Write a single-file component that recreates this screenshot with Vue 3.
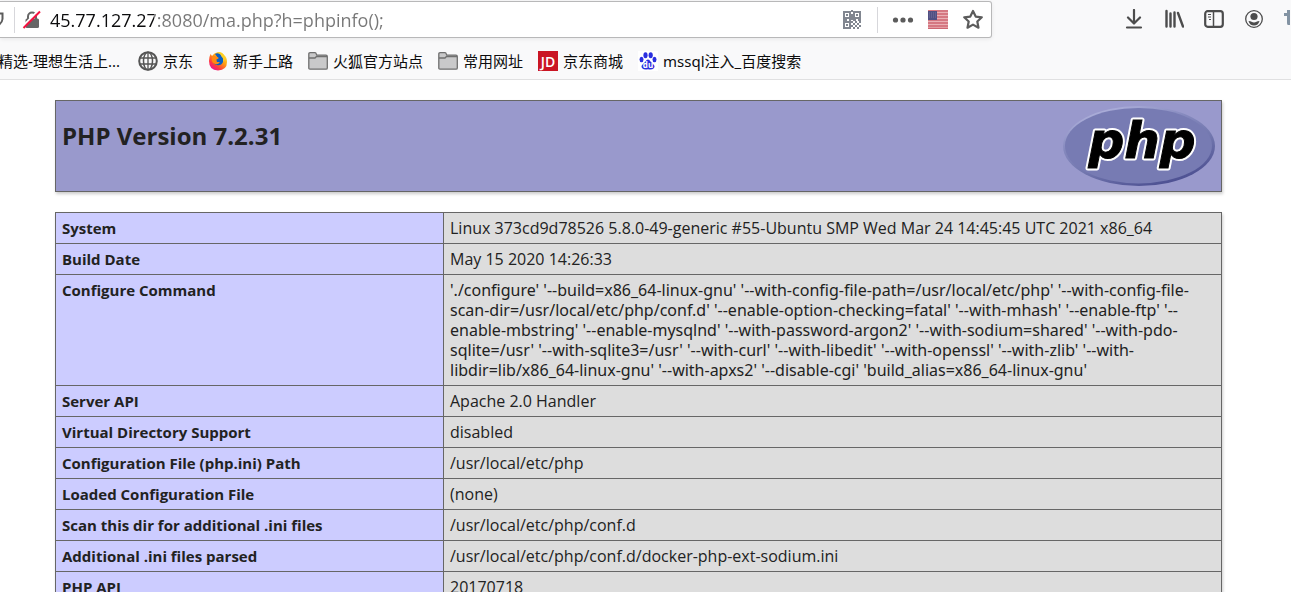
<script setup>
import { ref } from 'vue'

const url = ref('45.77.127.27:8080/ma.php?h=phpinfo();')

const bookmarks = [
  { icon: 'globe', label: '京东' },
  { icon: 'firefox', label: '新手上路' },
  { icon: 'folder', label: '火狐官方站点' },
  { icon: 'folder', label: '常用网址' },
  { icon: 'jd', label: '京东商城' },
  { icon: 'baidu', label: 'mssql注入_百度搜索' },
]

const rows = [
  ['System', 'Linux 373cd9d78526 5.8.0-49-generic #55-Ubuntu SMP Wed Mar 24 14:45:45 UTC 2021 x86_64'],
  ['Build Date', 'May 15 2020 14:26:33'],
  ['Configure Command', [
    "'./configure' '--build=x86_64-linux-gnu' '--with-config-file-path=/usr/local/etc/php' '--with-config-file-",
    "scan-dir=/usr/local/etc/php/conf.d' '--enable-option-checking=fatal' '--with-mhash' '--enable-ftp' '--",
    "enable-mbstring' '--enable-mysqlnd' '--with-password-argon2' '--with-sodium=shared' '--with-pdo-",
    "sqlite=/usr' '--with-sqlite3=/usr' '--with-curl' '--with-libedit' '--with-openssl' '--with-zlib' '--with-",
    "libdir=lib/x86_64-linux-gnu' '--with-apxs2' '--disable-cgi' 'build_alias=x86_64-linux-gnu'",
  ].join('\n')],
  ['Server API', 'Apache 2.0 Handler'],
  ['Virtual Directory Support', 'disabled'],
  ['Configuration File (php.ini) Path', '/usr/local/etc/php'],
  ['Loaded Configuration File', '(none)'],
  ['Scan this dir for additional .ini files', '/usr/local/etc/php/conf.d'],
  ['Additional .ini files parsed', '/usr/local/etc/php/conf.d/docker-php-ext-sodium.ini'],
  ['PHP API', '20170718'],
]
</script>

<template>
  <div class="window">
    <header class="chrome">
      <div class="navbar">
        <div class="urlbar">
          <svg class="shield" width="6" height="20" viewBox="0 0 6 20"><path d="M-4 3.500H2.500V9Q2 14-4 16.500" fill="none" stroke="#5c5c5c" stroke-width="2" /></svg>
          <span class="divider"></span>
          <button class="icon-btn lock" aria-label="Connection not secure">
            <svg width="20" height="20" viewBox="0 0 20 20">
              <path d="M6 9V6.500a4 4 0 0 1 8 0V9" fill="none" stroke="#666" stroke-width="2" />
              <rect x="3.500" y="8.500" width="13.500" height="9.500" rx="1.500" fill="#666" />
              <path d="M0.500 16.500 16 1" stroke="#fff" stroke-width="2" />
              <path d="M1.500 18 18 1.500" stroke="#f5113f" stroke-width="2" />
            </svg>
          </button>
          <input v-model="url" class="address" type="text" aria-label="Address" spellcheck="false" />
          <button class="icon-btn" aria-label="QR code">
            <svg width="20" height="20" viewBox="0 0 20 20" fill="none" stroke="#818690" stroke-width="2">
              <rect x="2" y="2" width="6" height="6" /><rect x="12" y="2" width="6" height="6" /><rect x="2" y="12" width="6" height="6" />
              <path d="M4 5h2M14 5h2M4 15h2M9 1h2M9 5h2M10 6v4M1 10h4M7 10h2M11 10h3M16 10h3M9 12h2M13 12h2M17 12h2M11 14h2M15 14h2M9 16h2M13 16h2M17 16h2M11 18h2M15 18h2" />
            </svg>
          </button>
          <span class="divider gap"></span>
          <button class="icon-btn" aria-label="Page actions">
            <svg width="22" height="20" viewBox="0 0 22 20" fill="#5c5c5c"><circle cx="3.500" cy="10" r="2.600" /><circle cx="11" cy="10" r="2.600" /><circle cx="18.500" cy="10" r="2.600" /></svg>
          </button>
          <button class="icon-btn flag" aria-label="Site location">
            <svg width="20" height="19" viewBox="0 0 20 19">
              <rect width="20" height="19" fill="#eab0b5" />
              <path d="M0 1h20M0 4h20M0 7h20M0 10h20M0 13h20M0 16h20M0 18.500h20" stroke="#ce6672" stroke-width="1.500" />
              <rect y="1" width="9" height="9" fill="#504f82" />
              <path d="M1 3h7M1 5h7M1 7h7" stroke="#74729c" stroke-dasharray="1 1" />
            </svg>
          </button>
          <button class="icon-btn star" aria-label="Bookmark this page">
            <svg width="22" height="22" viewBox="0 0 22 22"><path d="m11 2 2.700 5.600 6.100.7-4.500 4.200 1.200 6.200-5.500-3.100-5.500 3.100 1.200-6.200-4.500-4.200 6.100-.7Z" fill="none" stroke="#5c5c5c" stroke-width="2.200" stroke-linejoin="round" /></svg>
          </button>
        </div>
        <div class="tools">
          <button class="icon-btn" aria-label="Downloads">
            <svg width="20" height="20" viewBox="0 0 20 20" fill="none" stroke="#4c4c4c" stroke-width="2.200" stroke-linecap="round" stroke-linejoin="round"><path d="M10 1v13M4 8.500l6 6 6-6M3 18.500h14" /></svg>
          </button>
          <button class="icon-btn" aria-label="Library">
            <svg width="20" height="20" viewBox="0 0 20 20" fill="none" stroke="#4c4c4c" stroke-width="2.400" stroke-linecap="round"><path d="M2.500 2v15.500M6.500 4.500v13M10.500 3.500v14M14 4l5 13.500" /></svg>
          </button>
          <button class="icon-btn" aria-label="Sidebars">
            <svg width="20" height="20" viewBox="0 0 20 20" fill="none" stroke="#4c4c4c"><rect x="1.200" y="2.200" width="17.600" height="15.600" rx="2.500" stroke-width="2.200" /><path d="M9.500 2v16" stroke-width="1.500" /><path d="M4 5.500h3M4 8h3M5 10.500h2" stroke-width="1.200" /></svg>
          </button>
          <button class="icon-btn" aria-label="Account">
            <svg width="20" height="20" viewBox="0 0 20 20" fill="#4c4c4c"><circle cx="10" cy="10" r="8.300" fill="none" stroke="#4c4c4c" stroke-width="1.300" /><circle cx="10" cy="7.500" r="3.600" /><path d="M4.500 12q2 0 3 .8 2.500 1.200 5 0 1-.8 3-.8-1.300 4.500-5.500 4.500T4.500 12Z" /></svg>
          </button>
          <svg class="extension" width="6" height="20" viewBox="0 0 6 20" fill="#8393a3"><path d="M3 1h3v15H4Q3 16 3 14V7H0V4h3Z" /></svg>
        </div>
      </div>
      <nav class="bookmarks">
        <a class="bookmark first" href="#">精选-理想生活上...</a>
        <a v-for="b in bookmarks" :key="b.label" class="bookmark" href="#">
          <svg v-if="b.icon === 'globe'" width="20" height="20" viewBox="0 0 20 20" fill="none" stroke="#555" stroke-width="1.500">
            <circle cx="10" cy="10" r="8.800" stroke-width="2" /><ellipse cx="10" cy="10" rx="4.500" ry="8.800" /><path d="M10 1v18M1.500 7h17M1.500 13h17" stroke-width="1.300" />
          </svg>
          <svg v-else-if="b.icon === 'firefox'" width="20" height="20" viewBox="0 0 20 20">
            <defs>
              <linearGradient id="fox" x1=".85" y1=".1" x2=".2" y2=".95"><stop offset="0" stop-color="#ffe638" /><stop offset=".4" stop-color="#ff9a12" /><stop offset=".75" stop-color="#ff3a3f" /><stop offset="1" stop-color="#e9129a" /></linearGradient>
            </defs>
            <path d="M2.500 3 4 5Q6 2 10 1q4 0 6 3 3 2 3 7 0 8-9 8.500Q1 19 1 10q0-4 1.500-7Z" fill="url(#fox)" />
            <path d="M7 3q3-2 6 1 3 3 2 7-2 4-6 3-4-1-4-4 2 1 4 0l-2-2 3-1Z" fill="#0a5fc4" />
            <path d="M4 6q2-2 5 0l2 1-3 2 1 2 3 0q-2 3-5 2-4-1-3-7Z" fill="#ff8a12" />
            <path d="M10 1q3 1 3 4 3 2 2 6 3-2 1-7-2-3-6-3Z" fill="#ffcf24" />
          </svg>
          <svg v-else-if="b.icon === 'folder'" width="20" height="20" viewBox="0 0 20 20" fill="#c9c9ca" stroke="#6f6f6f" stroke-width="1.300">
            <path d="M.8 17V3q0-1.300 1.300-1.300H7q1 0 1.300 1.300l.5 1.200H18q1.300 0 1.300 1.300V17q0 1.200-1.300 1.200H2Q.8 18.200.8 17Z" /><path d="M1 7h6l1.500-1.500H19" fill="none" />
          </svg>
          <svg v-else-if="b.icon === 'jd'" width="20" height="20" viewBox="0 0 20 20">
            <rect width="20" height="20" fill="#ca1524" /><text x="10" y="15.500" text-anchor="middle" class="jd">JD</text>
          </svg>
          <svg v-else width="20" height="20" viewBox="0 0 20 20" fill="#2a2fe0">
            <rect width="20" height="20" fill="#fff" /><ellipse cx="7.500" cy="4.300" rx="2.100" ry="3" /><ellipse cx="12.700" cy="4.300" rx="2.100" ry="3" /><ellipse cx="3.500" cy="8.500" rx="2" ry="2.700" /><ellipse cx="16.500" cy="8.500" rx="2" ry="2.700" />
            <path d="M10 8.500q1.500 0 2.500 2l3 3q2 2 0 4-1.500 1.500-5.500.8-4 .7-5.500-.8-2-2 0-4l3-3q1-2 2.500-2Z" /><text x="10" y="17" text-anchor="middle" class="du">du</text>
          </svg>
          <span>{{ b.label }}</span>
        </a>
      </nav>
    </header>

    <main class="page">
      <section class="banner">
        <h1>PHP Version 7.2.31</h1>
        <svg class="logo" width="152" height="80" viewBox="0 0 152 80" role="img" aria-label="PHP logo">
          <defs>
            <linearGradient id="rim" x1=".2" y1="0" x2=".75" y2="1"><stop offset="0" stop-color="#b4b6df" /><stop offset=".35" stop-color="#8488bd" /><stop offset=".6" stop-color="#7378af" /><stop offset="1" stop-color="#484b8e" /></linearGradient>
          </defs>
          <ellipse cx="76" cy="40" rx="76" ry="40" fill="url(#rim)" />
          <ellipse cx="75.500" cy="39.700" rx="73.500" ry="37.700" fill="#777bb3" />
          <text x="79" y="52" text-anchor="middle" class="php php-outline">php</text>
          <text x="79" y="52" text-anchor="middle" class="php" aria-hidden="true">php</text>
        </svg>
      </section>

      <table class="info">
        <tbody>
          <tr v-for="[name, value] in rows" :key="name">
            <th scope="row">{{ name }}</th>
            <td :class="{ command: value.includes('\n') }">{{ value }}</td>
          </tr>
        </tbody>
      </table>
    </main>
  </div>
</template>

<style>
html {
  overflow: hidden;
}
body {
  background: #fff;
}
</style>

<style scoped>
.window {
  height: 100vh;
  overflow: hidden;
  color: #222;
  font-family: "Open Sans", "Noto Sans CJK SC", sans-serif;
}
.chrome {
  box-sizing: border-box;
  height: 80px;
  background: #f9f9fa;
  border-bottom: 1px solid #e0e0e1;
}
.navbar {
  display: flex;
  align-items: flex-start;
  padding-top: 1px;
}
.urlbar {
  box-sizing: border-box;
  flex: 1;
  display: flex;
  align-items: center;
  height: 37px;
  background: #fff;
  border: 1px solid #b8b8b9;
  border-left: 0;
  border-radius: 0 3px 3px 0;
  box-shadow: 0 1px 4px rgba(0, 0, 0, 0.08);
}
.shield {
  margin-right: 8px;
}
.divider {
  width: 1px;
  height: 26px;
  background: #d7d7db;
}
.divider.gap {
  margin: 0 14px 0 15px;
}
.icon-btn {
  display: flex;
  padding: 0;
  border: 0;
  background: none;
}
.lock {
  margin: 0 8px 0 7px;
}
.flag {
  margin: 0 14px;
}
.star {
  margin-right: 7px;
}
.address {
  flex: 1;
  min-width: 0;
  height: 28px;
  padding: 0;
  border: 0;
  outline: 0;
  font: 18px/28px "Open Sans", sans-serif;
  color: transparent;
  background: linear-gradient(90deg, #0c0c0d 104px, #777 104px);
  -webkit-background-clip: text;
  background-clip: text;
}
.tools {
  display: flex;
  align-items: center;
  gap: 20px;
  height: 36px;
  margin-left: 132px;
  margin-right: 1px;
}
.bookmarks {
  display: flex;
  align-items: center;
  gap: 15px;
  height: 46px;
}
.bookmark {
  display: flex;
  align-items: center;
  gap: 5px;
  color: #0c0c0d;
  font-family: "Noto Sans", "Noto Sans CJK SC", sans-serif;
  font-size: 15px;
  line-height: 20px;
  text-decoration: none;
  white-space: nowrap;
}
.bookmark.first {
  justify-content: flex-end;
  width: 120px;
  margin-right: 3px;
}
.jd {
  font: 600 14px "Open Sans", sans-serif;
  fill: #fff;
}
.du {
  font: bold 8px "Open Sans", sans-serif;
  fill: #fff;
}
.page {
  padding: 20px 69px 0 55px;
}
.banner {
  box-sizing: border-box;
  display: flex;
  justify-content: space-between;
  min-height: 92px;
  padding: 5px 6px;
  border: 1px solid #666;
  background: #99c;
  box-shadow: 1px 2px 3px #ccc;
}
h1 {
  margin: 14px 0 0;
  font-size: 24px;
  line-height: 32px;
}
.php {
  font: italic bold 50px "DejaVu Sans", sans-serif;
  fill: #000;
  stroke: #000;
  stroke-width: 1px;
}
.php-outline {
  fill: #fff;
  stroke: #fff;
  stroke-width: 5px;
  stroke-linejoin: round;
}
.info {
  width: 100%;
  margin-top: 20px;
  border-collapse: collapse;
  box-shadow: 1px 2px 3px #ccc;
  font-size: 15px;
  line-height: 20px;
}
th,
td {
  padding: 5px 6px;
  border: 1px solid #666;
  text-align: left;
  vertical-align: top;
}
th {
  width: 375px;
  background: #ccf;
}
td {
  background: #ddd;
  font-size: 16px;
}
.command {
  font-family: "Noto Sans", sans-serif;
  white-space: pre-line;
}
</style>
